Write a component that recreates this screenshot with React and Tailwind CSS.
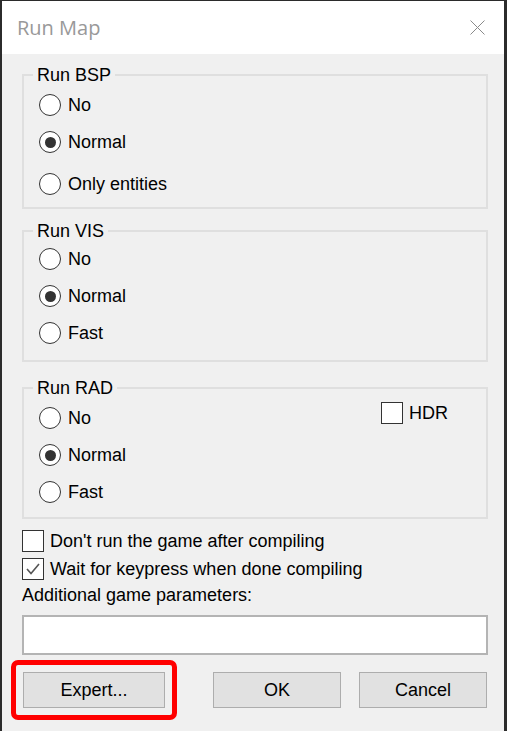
import React from 'react';

function Radio({ label, checked, className = '' }) {
    return (
        <div className={`flex items-center h-[22px] pl-[15px] ${className}`}>
            <div className="w-[22px] h-[22px] rounded-full border-[1.5px] border-[#333333] bg-white flex items-center justify-center shrink-0">
                {checked && <div className="w-[11px] h-[11px] rounded-full bg-[#333333]"></div>}
            </div>
            <span className="ml-[7px] leading-[20px]">{label}</span>
        </div>
    );
}

function Check({ label, checked, className = '' }) {
    return (
        <div className={`flex items-center h-[22px] ${className}`}>
            <div className="w-[22px] h-[22px] border-[1.5px] border-[#333333] bg-white flex items-center justify-center shrink-0">
                {checked && (
                    <svg width="16" height="16" viewBox="0 0 16 16">
                        <polyline points="2,8 6,12.5 14,3" fill="none" stroke="#555555" strokeWidth="1.6" />
                    </svg>
                )}
            </div>
            <span className="ml-[6px] leading-[20px]">{label}</span>
        </div>
    );
}

function Group({ title, children, className = '' }) {
    return (
        <fieldset className={`w-[466px] border-2 border-[#dfdfdf] ${className}`}>
            <legend className="ml-[9px] px-[4px] leading-[20px]">{title}</legend>
            {children}
        </fieldset>
    );
}

function Button({ children, className = '' }) {
    return (
        <div className={`h-[36px] bg-[#e1e1e1] border border-[#adadad] flex items-center justify-center ${className}`}>
            {children}
        </div>
    );
}

export default function App() {
    return (
        <div className="h-[731px] bg-[#2b2b2b] pt-[1px] pl-[2px] pr-[3px] overflow-hidden">
            <div className="h-full bg-[#f0f0f0] flex flex-col">
                {/* Title bar */}
                <div className="h-[53px] bg-white flex items-center pl-[15px] pr-[19px] shrink-0">
                    <span className="font-['Open_Sans',sans-serif] text-[20px] leading-[28px] text-[#999999]">Run Map</span>
                    <svg className="ml-auto" width="15" height="15" viewBox="0 0 15 15">
                        <line x1="0.5" y1="0.5" x2="14.5" y2="14.5" stroke="#8a8a8a" strokeWidth="1" />
                        <line x1="14.5" y1="0.5" x2="0.5" y2="14.5" stroke="#8a8a8a" strokeWidth="1" />
                    </svg>
                </div>

                {/* Body */}
                <div className="pl-[20px] pt-[11px] font-['Liberation_Sans',Arial,sans-serif] text-[18px] text-black">
                    <Group title="Run BSP" className="pb-[12px]">
                        <Radio label="No" className="mt-[9px]" />
                        <Radio label="Normal" checked className="mt-[15px]" />
                        <Radio label="Only entities" className="mt-[20px]" />
                    </Group>

                    <Group title="Run VIS" className="mt-[12px] pb-[16px]">
                        <Radio label="No" className="mt-[7px]" />
                        <Radio label="Normal" checked className="mt-[15px]" />
                        <Radio label="Fast" className="mt-[15px]" />
                    </Group>

                    <Group title="Run RAD" className="mt-[16px] pb-[14px]">
                        <div className="flex">
                            <div className="w-[357px]">
                                <Radio label="No" className="mt-[9px]" />
                                <Radio label="Normal" checked className="mt-[15px]" />
                                <Radio label="Fast" className="mt-[15px]" />
                            </div>
                            <Check label="HDR" className="mt-[4px]" />
                        </div>
                    </Group>

                    <Check label="Don't run the game after compiling" className="mt-[11px]" />
                    <Check label="Wait for keypress when done compiling" checked className="mt-[6px]" />
                    <div className="mt-[5px] leading-[20px]">Additional game parameters:</div>
                    <div className="mt-[10px] w-[466px] h-[40px] bg-white border-2 border-[#b4b4b4]"></div>

                    <div className="mt-[5px] flex items-center">
                        <div className="-ml-[11px] border-[5px] border-[#ff0000] rounded-[7px] p-[7px]">
                            <Button className="w-[142px]">Expert...</Button>
                        </div>
                        <Button className="w-[128px] ml-[36px]">OK</Button>
                        <Button className="w-[128px] ml-[18px]">Cancel</Button>
                    </div>
                </div>
            </div>
        </div>
    );
}
